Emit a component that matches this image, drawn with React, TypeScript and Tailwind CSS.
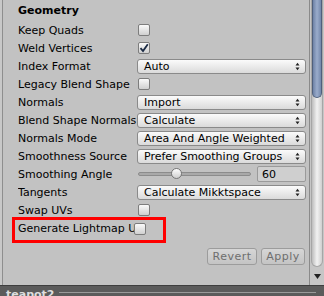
import React from "react";

const font = { fontFamily: '"DejaVu Sans", Verdana, sans-serif' };

const Checkbox = ({ checked = false }: { checked?: boolean }) => (
  <div className="flex h-[12px] w-[12px] items-center justify-center rounded-[2px] border border-[#7d7d7d] bg-gradient-to-b from-[#fafafa] to-[#d0d0d0]">
    {checked && (
      <svg width="10" height="10" viewBox="0 0 10 10">
        <path d="M1.5 5.2 L4 8 L8.8 1.2" fill="none" stroke="#1a2a44" strokeWidth="1.8" />
      </svg>
    )}
  </div>
);

const Dropdown = ({ value }: { value: string }) => (
  <div className="flex h-[15px] w-[169px] items-center justify-between rounded-[3px] border border-[#8a8a8a] bg-gradient-to-b from-[#fbfbfb] to-[#dadada] pl-[6px] pr-[5px] text-[11px] text-black">
    <span className="whitespace-nowrap leading-none">{value}</span>
    <svg width="5" height="9" viewBox="0 0 5 9">
      <path d="M0.5 3.5 L2.5 0.8 L4.5 3.5 Z M0.5 5.5 L2.5 8.2 L4.5 5.5 Z" fill="#222" />
    </svg>
  </div>
);

const Row = ({ label, children }: { label: string; children?: React.ReactNode }) => (
  <div className="flex h-[18px] items-center">
    <div className="w-[119px] shrink-0 overflow-hidden whitespace-nowrap text-[11px] leading-none text-black">{label}</div>
    <div className="flex items-center">{children}</div>
  </div>
);

export default function App() {
  return (
    <div className="flex h-[296px] w-[324px] flex-col overflow-hidden bg-[#c2c2c2]" style={font}>
      <div className="flex flex-1">
        <div className="w-[2px] bg-[#c8c8c8]" />
        <div className="w-[1px] bg-[#8e8e8e]" />
        <div className="flex flex-1 flex-col pl-[15px] pt-[1px]">
          <div className="flex h-[18px] items-center text-[11px] font-bold leading-none text-black">Geometry</div>
          <div className="h-[2px]" />
          <Row label="Keep Quads">
            <div className="ml-[1px]"><Checkbox /></div>
          </Row>
          <Row label="Weld Vertices">
            <div className="ml-[1px]"><Checkbox checked /></div>
          </Row>
          <Row label="Index Format"><Dropdown value="Auto" /></Row>
          <Row label="Legacy Blend Shape">
            <div className="ml-[1px]"><Checkbox /></div>
          </Row>
          <Row label="Normals"><Dropdown value="Import" /></Row>
          <Row label="Blend Shape Normals"><Dropdown value="Calculate" /></Row>
          <Row label="Normals Mode"><Dropdown value="Area And Angle Weighted" /></Row>
          <Row label="Smoothness Source"><Dropdown value="Prefer Smoothing Groups" /></Row>
          <Row label="Smoothing Angle">
            <div className="flex w-[169px] items-center">
              <div className="relative ml-[1px] h-[4px] w-[113px] rounded-full border border-[#8c8c8c] bg-[#a9a9a9]">
                <div className="absolute left-[32px] top-[-5px] h-[11px] w-[11px] rounded-full border border-[#777] bg-gradient-to-b from-[#fdfdfd] to-[#cfcfcf]" />
              </div>
              <div className="ml-[6px] flex h-[16px] w-[49px] items-center rounded-[2px] border border-[#9a9a9a] bg-[#cfcfcf] pl-[4px] text-[11px] leading-none text-black">60</div>
            </div>
          </Row>
          <Row label="Tangents"><Dropdown value="Calculate Mikktspace" /></Row>
          <Row label="Swap UVs">
            <div className="ml-[1px]"><Checkbox /></div>
          </Row>
          <div className="-ml-[6px] -mt-[2px] h-[26px] w-[154px] border-[3px] border-[#ff0000] pl-[3px]">
            <div className="flex h-[17px] items-center">
              <div className="w-[116px] shrink-0 overflow-hidden whitespace-nowrap text-[11px] leading-none text-black">Generate Lightmap UVs</div>
              <Checkbox />
            </div>
          </div>
          <div className="flex justify-end pr-[4px] pt-[5px]">
            <div className="flex h-[17px] w-[50px] items-center justify-center rounded-[3px] border border-[#9c9c9c] bg-gradient-to-b from-[#d6d6d6] to-[#c4c4c4] text-[11px] leading-none tracking-[0.5px] text-[#6e6e6e]">Revert</div>
            <div className="ml-[4px] flex h-[17px] w-[44px] items-center justify-center rounded-[3px] border border-[#9c9c9c] bg-gradient-to-b from-[#d6d6d6] to-[#c4c4c4] text-[11px] leading-none tracking-[0.5px] text-[#6e6e6e]">Apply</div>
          </div>
        </div>
        <div className="flex w-[15px] flex-col border-l border-[#8a8a8a] bg-[#c6c6c6]">
          <div className="relative mx-[1px] flex-1 rounded-b-[7px] border border-t-0 border-[#a6a6a6] bg-gradient-to-r from-[#bdbdbd] via-[#f2f2f2] to-[#cfcfcf]">
            <div className="h-[98px] rounded-b-[6px] border border-t-0 border-[#4f607c] bg-gradient-to-r from-[#6e82a6] via-[#9aaccb] to-[#7488ab]" />
          </div>
          <div className="flex h-[18px] items-center justify-center">
            <svg width="7" height="5" viewBox="0 0 7 5">
              <path d="M0 0 L7 0 L3.5 5 Z" fill="#222" />
            </svg>
          </div>
        </div>
      </div>
      <div className="flex h-[11px] items-start border-t border-[#3e3e3e] bg-[#5b5b5b]">
        <span className="ml-[6px] mt-[3px] text-[11px] font-bold leading-[11px] text-[#dedede]">teapot2</span>
        <div className="ml-[4px] mr-[8px] mt-[6px] h-[1px] flex-1 bg-[#9a9a9a]" />
      </div>
    </div>
  );
}
